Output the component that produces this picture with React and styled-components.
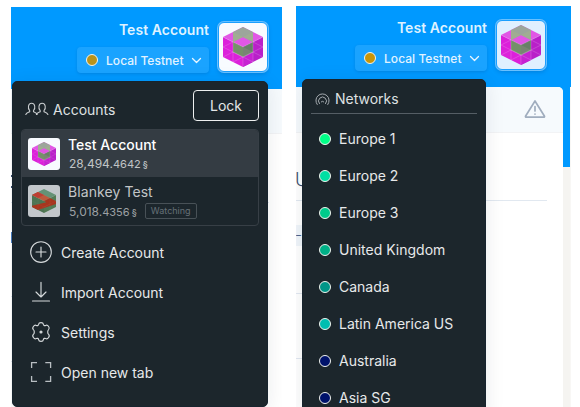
import React from "react";
import styled, { createGlobalStyle } from "styled-components";

const GlobalStyle = createGlobalStyle`
  *, *::before, *::after { box-sizing: border-box; }
  html, body { margin: 0; height: 407px; overflow: hidden; background: #fff; }
  body { font-family: Inter, "Liberation Sans", sans-serif; }
  svg { display: block; flex: none; }
`;

const Page = styled.main`
  width: 580px;
  height: 407px;
  overflow: hidden;
  display: flex;
  align-items: flex-start;
  padding-left: 11px;
  gap: 14px;
  background: #fff;
`;

const Screen = styled.section`
  position: relative;
  width: ${(p) => p.$width}px;
  height: ${(p) => 407 - p.$top}px;
  margin-top: ${(p) => p.$top}px;
  overflow: hidden;
  background: ${(p) => p.$background};
`;

const Header = styled.header`
  display: flex;
  justify-content: flex-end;
  gap: 9px;
  height: ${(p) => p.$height}px;
  padding: ${(p) => p.$padding};
  background: #0099ff;
`;

const Identity = styled.div`
  display: flex;
  flex-direction: column;
  align-items: flex-end;
`;

const UserName = styled.div`
  height: 25px;
  font-size: 14px;
  line-height: 16px;
  font-weight: 600;
  letter-spacing: 0.05px;
  color: #dff2ff;
  white-space: nowrap;
`;

const NetworkPill = styled.div`
  display: flex;
  align-items: center;
  width: 132px;
  height: 26px;
  padding: 0 8px 0 9px;
  border-radius: 4px;
  background: #1aa3ff;
  box-shadow: 0 1px 3px rgba(0, 60, 120, 0.2);
  color: #e2f3ff;
  font-size: 12px;
  font-weight: 500;
  white-space: nowrap;
`;

const PillLabel = styled.span`
  width: 77px;
  margin: 0 8px 0 8px;
  letter-spacing: 0.05px;
`;

const Dot = styled.span`
  flex: none;
  width: 12px;
  height: 12px;
  border-radius: 50%;
  border: 1px solid #f1f3ee;
  background: ${(p) => p.$color};
`;

const AvatarFrame = styled.div`
  width: 50px;
  height: 50px;
  display: grid;
  place-items: center;
  border-radius: 6px;
  border: 1px solid #1a9fff;
  background: ${(p) => p.$background};
  box-shadow: 0 0 0 1px #68c0ff, 0 2px 4px rgba(0, 50, 110, 0.25);
`;

const Toolbar = styled.div`
  height: ${(p) => p.$height}px;
  display: flex;
  justify-content: flex-end;
  align-items: flex-start;
  padding: 12px 17px 0 0;
  border-bottom: 1px solid #f2f3f5;
  border-top-right-radius: ${(p) => p.$radius || 0}px;
  background: #f6fafd;
`;

const Body = styled.div`
  display: flex;
  align-items: flex-start;
`;

const Content = styled.div`
  flex: 1;
  height: 330px;
  border-top-right-radius: 5px;
  background: #fff;
`;

const Gutter = styled.div`
  width: 8px;
  height: 330px;
  border-right: 1px solid #f8f7f5;
  background: linear-gradient(#0099ff 80px, #f5f4f1 80px);
`;

const Heading = styled.div`
  height: 68px;
  padding-top: 36px;
  margin-right: 16px;
  border-bottom: 1px solid #e1e8f0;
  font-size: 18px;
  line-height: 22px;
  font-weight: 300;
  color: #3c4f6e;
  text-indent: -1px;
`;

const ContentRow = styled.div`
  width: ${(p) => p.$width || 100}px;
  height: ${(p) => p.$height}px;
  padding-top: ${(p) => p.$top || 0}px;
  border-bottom: 1px solid #e2e8f1;
`;

const Chip = styled.div`
  width: 10px;
  height: 21px;
  background: #f0f5fa;
  color: #33507c;
  font-size: 10px;
  line-height: 21px;
`;

const EdgeMark = styled.div`
  width: 1px;
  height: ${(p) => p.$height}px;
  background: ${(p) => p.$background};
`;

const Menu = styled.nav`
  position: absolute;
  left: ${(p) => p.$left}px;
  top: ${(p) => p.$top}px;
  width: ${(p) => p.$width}px;
  height: ${(p) => p.$height}px;
  border-radius: 5px;
  border: 1px solid #17242e;
  background: #1c262c;
  box-shadow: 0 3px 20px rgba(20, 30, 45, 0.09);
  color: #e4e6e7;
`;

const MenuHeader = styled.div`
  display: flex;
  align-items: flex-start;
  height: 47px;
  padding: 8px 8px 0 12px;
`;

const TitleIcon = styled.span`
  padding-top: ${(p) => p.$top}px;
`;

const MenuTitle = styled.h2`
  flex: 1;
  margin: 0;
  padding: ${(p) => p.$pad};
  font-size: 14px;
  font-weight: 400;
  line-height: 18px;
  color: #dfe1e2;
`;

const LockButton = styled.button`
  width: 66px;
  height: 31px;
  padding: 0;
  border: 1px solid #eef0f0;
  border-radius: 4px;
  background: transparent;
  color: #e4e6e7;
  font: 400 14px Inter, "Liberation Sans", sans-serif;
`;

const AccountList = styled.div`
  width: 238px;
  height: 97px;
  margin-left: 8px;
  border: 1px solid #373f46;
  border-radius: 4px;
  overflow: hidden;
`;

const AccountRow = styled.div`
  display: flex;
  height: ${(p) => (p.$active ? 47 : 48)}px;
  padding: 8px 6px;
  gap: 8px;
  background: ${(p) => (p.$active ? "#343c43" : "transparent")};
`;

const SmallAvatar = styled.div`
  display: grid;
  place-items: center;
  width: 32px;
  height: 32px;
  border-radius: 3px;
  background: ${(p) => (p.$active ? "#f8fbff" : "#c2c7cb")};
`;

const AccountName = styled.div`
  margin-top: -1px;
  font-size: 14px;
  line-height: 16px;
  font-weight: ${(p) => (p.$active ? 500 : 400)};
  letter-spacing: ${(p) => (p.$active ? 0 : 0.08)}px;
  color: ${(p) => (p.$active ? "#ffffff" : "#c2c5c7")};
`;

const Balance = styled.div`
  display: flex;
  align-items: baseline;
  height: 17px;
  margin: ${(p) => (p.$active ? 2 : 3)}px 0 0 1px;
  font-size: 12px;
  line-height: 17px;
  color: ${(p) => (p.$active ? "#c1c4c6" : "#9ca1a4")};
`;

const Fraction = styled.span`
  font-size: 11px;
`;

const Currency = styled.span`
  margin-left: 2px;
  font-size: 9px;
  font-weight: 500;
`;

const Badge = styled.span`
  align-self: center;
  width: 52px;
  height: 16px;
  margin: -1px 0 0 8px;
  border: 1px solid #485157;
  border-radius: 2px;
  color: #667077;
  font-size: 9px;
  line-height: 14px;
  text-align: center;
`;

const Actions = styled.div`
  padding: 6px 0 0 17px;
`;

const ActionItem = styled.div`
  display: flex;
  align-items: center;
  gap: 9px;
  height: 40px;
  font-size: 14px;
  color: #e7e9ea;
`;

const NetworkHeader = styled.div`
  display: flex;
  height: 34px;
  margin: 0 8px;
  padding: 10px 0 0 4px;
  gap: 5px;
  border-bottom: 1px solid #555e65;
`;

const NetworkList = styled.div`
  padding: 6px 0 0 16px;
`;

const NetworkItem = styled.div`
  display: flex;
  align-items: center;
  height: 37px;
  gap: 8px;
  font-size: 14px;
  color: #e7e9ea;
  white-space: nowrap;
`;

function Cube({ size, tone = "pink" }) {
  const pink = tone === "pink";
  return (
    <svg width={size} height={size} viewBox="0 0 40 40">
      {pink ? (
        <g>
          <path d="M20 0 40 10 20 20 0 10Z" fill="#e157e5" />
          <path d="M0 10 20 20V40L0 30Z" fill="#dc20da" />
          <path d="M40 10 20 20V40L40 30Z" fill="#b920c9" />
          <path d="M20 30 30 35 20 40ZM20 30 30 25V35Z" fill="#c722d2" />
          <path d="M20 0 30 5V15L20 10 10 15V5Z" fill="#9ca69b" />
          <path d="M10 5 20 10 10 15ZM30 5 20 10 30 15Z" fill="#a0ad92" />
          <path d="M10 15 20 20V30L10 25Z" fill="#75906a" />
          <path d="M30 15 20 20V30L30 25Z" fill="#687f67" />
          <path d="M20 20 30 25 20 30Z" fill="#788573" />
        </g>
      ) : (
        <g>
          <path d="M20 0 40 10 20 20 0 10Z" fill="#649276" />
          <path d="M0 10 20 20V40L0 30Z" fill="#4d7453" />
          <path d="M40 10 20 20V40L40 30Z" fill="#527b55" />
          <path d="M0 10 10 5 30 15 20 20Z" fill="#bd593c" />
          <path d="M0 10 10 5 20 10 10 15Z" fill="#be3e34" />
          <path d="M20 20 30 15 40 20V25L10 35 0 30V28L24 22Z" fill="#a7351e" />
        </g>
      )}
      <path
        d={
          pink
            ? "M0 10 20 20 40 10M20 30V40M0 20 10 15M40 20 30 15M10 15V35M30 15V35M0 20 20 30 40 20M0 30 10 25M40 30 30 25M10 25 30 35M30 25 10 35"
            : "M10 5 30 15 40 20M0 10 20 20 40 10M10 15V35M30 15V35M0 20 20 30 40 20M10 35 30 25"
        }
        fill="none"
        stroke="#fff"
        strokeOpacity={pink ? 0.25 : 0.08}
        strokeWidth=".7"
      />
    </svg>
  );
}

const Chevron = () => (
  <svg width="11" height="7" viewBox="0 0 11 7" fill="none" stroke="#e8f6ff" strokeWidth="1.3" strokeLinecap="round" strokeLinejoin="round">
    <path d="m1.5 1.5 4 4 4-4" />
  </svg>
);

const PeopleIcon = () => (
  <svg width="24" height="15" viewBox="0 0 24 15" fill="none" stroke="#c9cdcf" strokeWidth="1.1" strokeLinecap="round" strokeLinejoin="round">
    <path d="M.8 12.5C1.5 10.7 3 10.4 4.7 9.7V8.6C2.4 6.2 3.2 1.2 6.6 1.2s4.2 5 1.9 7.4v1.1c1.5.6 3 .9 3.7 2.8M11.4 12.5c.7-1.8 2.2-2.1 3.8-2.8V8.6c-2.3-2.4-1.5-7.4 1.9-7.4s4.2 5 1.9 7.4v1.1c1.7.7 3.2 1 3.9 2.8" />
  </svg>
);

const BroadcastIcon = () => (
  <svg width="15" height="13" viewBox="0 0 15 13" fill="none" stroke="#a5abb0" strokeWidth="1" strokeLinecap="round">
    <path d="M2.2 11.5A6.6 6.6 0 1 1 12.8 11.5M4.4 10.6A4 4 0 1 1 10.6 10.6M6.3 8.8a1.7 1.7 0 0 1 2.4 0" />
  </svg>
);

const WarningIcon = () => (
  <svg width="22" height="20" viewBox="0 0 22 20" fill="none" stroke="#a0adbe" strokeWidth="1.7" strokeLinecap="round" strokeLinejoin="round">
    <path d="M11 2 1.5 17.2Q1.3 18.2 2.3 18.2H19.7Q20.7 18.2 20.5 17.2ZM11 7.5V12M11 15V15.1" />
  </svg>
);

function ActionIcon({ kind }) {
  return (
    <svg width="22" height="22" viewBox="0 0 22 22" fill="none" stroke="#d5d9db" strokeWidth="1.15" strokeLinecap="round" strokeLinejoin="round">
      {kind === "plus" && (
        <>
          <circle cx="11" cy="11" r="10.3" />
          <path d="M11 6v10M6 11h10" />
        </>
      )}
      {kind === "import" && <path d="M11 1.3v14.2M6 11l5 5 5-5M2.5 20h17" />}
      {kind === "settings" && (
        <>
          <path d="M8.6 3.4C8.9 1 13.1 1 13.4 3.4 13.7 4.7 14.7 5 15.7 4.4 17.8 3.3 20.4 7 18.6 8.6 17.4 9.6 17.4 12.4 18.6 13.4 20.4 15 17.8 18.7 15.7 17.6 14.7 17 13.7 17.3 13.4 18.6 13.1 21 8.9 21 8.6 18.6 8.3 17.3 7.3 17 6.3 17.6 4.2 18.7 1.6 15 3.4 13.4 4.6 12.4 4.6 9.6 3.4 8.6 1.6 7 4.2 3.3 6.3 4.4 7.3 5 8.3 4.7 8.6 3.4Z" />
          <circle cx="11" cy="11" r="1" fill="#d5d9db" />
        </>
      )}
      {kind === "expand" && (
        <path strokeLinecap="butt" strokeLinejoin="miter" strokeWidth="1.3" stroke="#b8bec2" d="M1.6 7V1.6H7M15.3 1.6h5.3V7M20.6 14.9v5.4h-5.3M7 20.3H1.6v-5.4" />
      )}
    </svg>
  );
}

const AccountHeader = ({ height, padding, avatar, dot }) => (
  <Header $height={height} $padding={padding}>
    <Identity>
      <UserName>Test Account</UserName>
      <NetworkPill>
        <Dot $color={dot} />
        <PillLabel>Local Testnet</PillLabel>
        <Chevron />
      </NetworkPill>
    </Identity>
    <AvatarFrame $background={avatar}>
      <Cube size={40} />
    </AvatarFrame>
  </Header>
);

const Account = ({ name, whole, fraction, active, watching }) => (
  <AccountRow $active={active}>
    <SmallAvatar $active={active}>
      <Cube size={24} tone={active ? "pink" : "green"} />
    </SmallAvatar>
    <div>
      <AccountName $active={active}>{name}</AccountName>
      <Balance $active={active}>
        {whole}.<Fraction>{fraction}</Fraction>
        <Currency>§</Currency>
        {watching && <Badge>Watching</Badge>}
      </Balance>
    </div>
  </AccountRow>
);

const actions = [
  { icon: "plus", label: "Create Account" },
  { icon: "import", label: "Import Account" },
  { icon: "settings", label: "Settings" },
  { icon: "expand", label: "Open new tab" },
];

const networks = [
  ["Europe 1", "#00ff87"],
  ["Europe 2", "#00dfa3"],
  ["Europe 3", "#00ca8b"],
  ["United Kingdom", "#00b087"],
  ["Canada", "#009688"],
  ["Latin America US", "#00bdb0"],
  ["Australia", "#00126b"],
  ["Asia SG", "#00126b"],
];

export default function App() {
  return (
    <Page>
      <GlobalStyle />
      <Screen $width={271} $top={7} $background="#fff">
        <AccountHeader height={82} padding="15px 14px 0 0" avatar="#f8fbff" dot="#b9931c" />
        <Toolbar $height={45} />
        <ContentRow $width={258} $height={69} $top={41}>
          <EdgeMark $height={13} $background="linear-gradient(#3c4f6e 2px, transparent 2px 11px, #3c4f6e 11px)" />
        </ContentRow>
        <ContentRow $height={94} $top={29}>
          <EdgeMark $height={11} $background="#4b80c4" />
        </ContentRow>
        <ContentRow $height={65} />
        <Menu $left={1} $top={74} $width={256} $height={326}>
          <MenuHeader>
            <TitleIcon $top={12}>
              <PeopleIcon />
            </TitleIcon>
            <MenuTitle $pad="11px 0 0 4px">Accounts</MenuTitle>
            <LockButton>Lock</LockButton>
          </MenuHeader>
          <AccountList>
            <Account name="Test Account" whole="28,494" fraction="4642" active />
            <Account name="Blankey Test" whole="5,018" fraction="4356" watching />
          </AccountList>
          <Actions>
            {actions.map((a) => (
              <ActionItem key={a.label}>
                <ActionIcon kind={a.icon} />
                {a.label}
              </ActionItem>
            ))}
          </Actions>
        </Menu>
      </Screen>
      <Screen $width={275} $top={6} $background="#0099ff">
        <AccountHeader height={81} padding="14px 25px 0 0" avatar="#dff0ff" dot="#c99508" />
        <Body>
          <Content>
            <Toolbar $height={46} $radius={5}>
              <WarningIcon />
            </Toolbar>
            <Heading>U</Heading>
            <ContentRow $height={93} $top={24}>
              <Chip>–</Chip>
            </ContentRow>
            <ContentRow $height={65} />
          </Content>
          <Gutter />
        </Body>
        <Menu $left={6} $top={73} $width={184} $height={340}>
          <NetworkHeader>
            <TitleIcon $top={3}>
              <BroadcastIcon />
            </TitleIcon>
            <MenuTitle $pad="0">Networks</MenuTitle>
          </NetworkHeader>
          <NetworkList>
            {networks.map(([name, color]) => (
              <NetworkItem key={name}>
                <Dot $color={color} />
                {name}
              </NetworkItem>
            ))}
          </NetworkList>
        </Menu>
      </Screen>
    </Page>
  );
}
